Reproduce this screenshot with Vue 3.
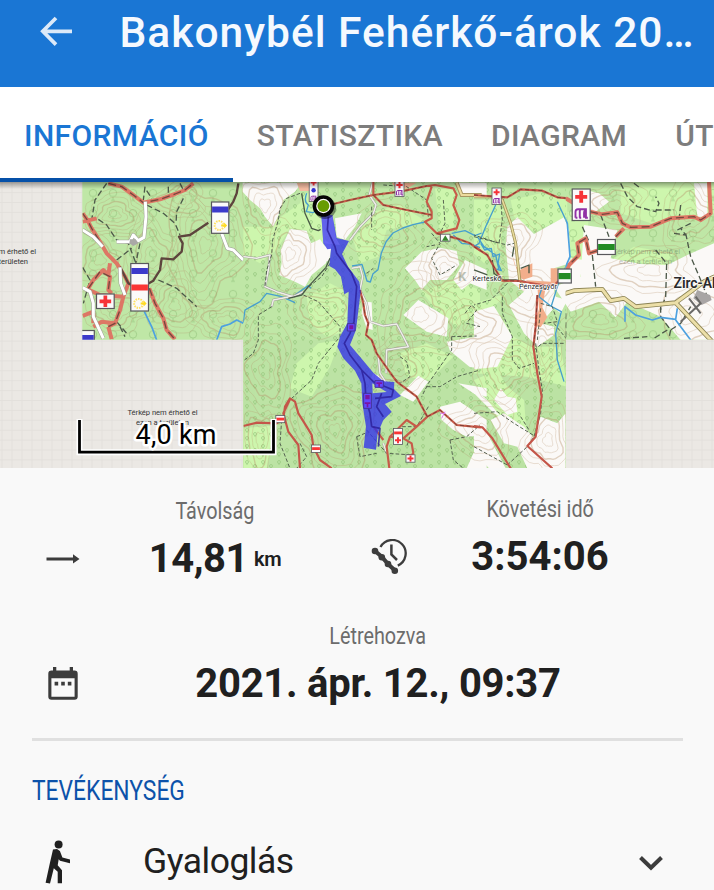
<template>
  <div class="screen">
    <header class="app-bar">
      <svg class="back" viewBox="0 0 36 36" width="36" height="36">
        <path d="M18 4 4.8 17.3 18 30.6M5 17.3h29" fill="none" stroke="#dce9f8" stroke-width="3.7" />
      </svg>
      <h1 class="title"><span>Bakonybél Fehérkő-árok 20…</span></h1>
    </header>

    <nav class="tabs">
      <a v-for="tab in tabs" :key="tab" class="tab" :class="{ active: tab === activeTab }" @click="activeTab = tab">{{ tab }}</a>
    </nav>

    <div class="map">
      <svg viewBox="0 182 714 286" width="714" height="286">
        <defs>
          <pattern id="grid" width="10" height="9.9" patternUnits="userSpaceOnUse" x="1.5" y="4">
            <rect width="10" height="10" fill="#ebe8e4" />
            <path d="M0 .5h10M.5 0v10" stroke="#e2dfdb" stroke-width=".9" />
          </pattern>
          <pattern id="bigTrees" width="20" height="20.200" patternUnits="userSpaceOnUse" x="83" y="186">
            <path d="M10 11v3.500M8 14.500h4" stroke="#8fbf79" stroke-width=".7" />
            <circle cx="10" cy="7" r="3.700" fill="none" stroke="#8fbf79" stroke-width=".7" />
          </pattern>
          <pattern id="smallTrees" width="16" height="16" patternUnits="userSpaceOnUse" x="243" y="186">
            <g fill="none" stroke="#93c67b" stroke-width=".65">
              <circle cx="4" cy="4" r="1.5" /><circle cx="12" cy="8" r="1.5" /><circle cx="4" cy="12" r="1.5" />
              <path d="M4 5.500v1.500M12 9.500v1.500M4 13.500v1.500" />
            </g>
          </pattern>
          <clipPath id="tiles"><path d="M82.300 182H714V339.700H565.700V468H243.300V339.700H82.300z" /></clipPath>
          <clipPath id="leftTile"><path d="M82.300 182H243.300V339.700H82.300z" /></clipPath>
          <clipPath id="midTile"><path d="M243.300 182H565.700V468H243.300z" /></clipPath>
          <clipPath id="rightTile"><path d="M565.700 182H714V339.700H565.700z" /></clipPath>
          <linearGradient id="topShade" x1="0" y1="0" x2="0" y2="1">
            <stop offset="0" stop-color="#000" stop-opacity=".34" />
            <stop offset="1" stop-color="#000" stop-opacity="0" />
          </linearGradient>
        </defs>

        <rect x="0" y="182" width="714" height="286" fill="url(#grid)" />
        <g class="notice">
          <text x="-34" y="253.500" textLength="70">Térkép nem érhető el</text>
          <text x="-25" y="264" textLength="53">ezen a területen</text>
          <text x="127.500" y="414.500" textLength="70">Térkép nem érhető el</text>
          <text x="136" y="425" textLength="53">ezen a területen</text>
        </g>

        <g clip-path="url(#tiles)">
          <rect x="82" y="182" width="632" height="286" fill="#bfe7a6" />
          <rect x="243" y="339.700" width="323" height="129" fill="#bce3a4" />

          <g v-for="area in fills" :key="area.x" :transform="place(area.x)">
            <path v-for="d in area.light" :key="d" :d="d" fill="#cdf6ad" />
          </g>
          <rect x="82" y="182" width="161.300" height="158" fill="url(#bigTrees)" opacity=".8" />
          <rect x="243.300" y="182" width="322.400" height="286" fill="url(#smallTrees)" />
          <rect x="565.700" y="182" width="149" height="158" fill="url(#bigTrees)" opacity=".8" />
          <g v-for="area in fills" :key="'w' + area.x" :transform="place(area.x)">
            <path v-for="d in area.open" :key="d" :d="d" fill="#fbf9f7" />
          </g>

          <g class="contour">
            <path v-for="(line, i) in contours" :key="i" :d="line.d" :class="{ thick: line.thick }" />
          </g>

          <g clip-path="url(#leftTile)">
            <g :transform="place(0)">
              <path class="dash wide" d="M320 10 285 60 275 120M295 118 320 135 350 180 385 190 408 250M440 75 490 100 525 130 540 165M550 55 530 95 528 130M420 190 405 260M248 262 270 300 250 370M350 240 395 205M475 300 530 325 590 380M350 425 380 460M435 20 430 60M505 20v30M440 32 455 55M540 10 550 30M360 440 375 470" />
              <path class="trail wide" d="M325 10 365 20 400 45 430 68 480 58 525 42 555 30 580 10M248 100 262 120 275 145 300 185 320 220 350 250 375 290 385 310 370 350 360 390 345 430 325 440M248 125 290 115M262 330 280 300 310 270 330 290 325 330 335 340M325 285 330 250M268 330 300 345 370 350M248 408 280 395M280 440 305 425 345 430M280 400v30M325 440 335 478M448 325 465 370 490 415 500 450 525 478" />
              <path class="trailDash wide" d="M325 10 365 20 400 45 430 68 480 58 525 42 555 30 580 10M248 100 262 120 275 145 300 185M265 325 300 275 330 290 325 330M448 325 465 370 490 415 500 450 525 478M325 440 345 430 360 390" />
              <path d="M360 260 385 310 420 325 460 302 480 270 485 235 520 238 545 215 548 190 537 170 570 165 625 128M680 95 700 65 710 40 715 10" fill="none" stroke="#5d443d" stroke-width="7" stroke-linejoin="round" />
              <path class="casing" d="M436 65 438 110 432 172 415 182 400 165 390 185 350 185M248 150 280 170 308 200M360 262 362 310 375 345M248 323 270 335 280 370 280 410 310 475M665 160 682 205 700 210 730 240" />
              <path class="whiteRoad" d="M436 65 438 110 432 172 415 182 400 165 390 185 350 185M248 150 280 170 308 200M360 262 362 310 375 345M248 323 270 335 280 370 280 410 310 475M665 160 682 205 700 210 730 240" />
              <path d="M390 178h17l8 12-15 8-12-8z" fill="#aaa8a7" />
              <path class="stream wide" d="M433 395 455 440 470 480M650 480 665 440 690 432 710 420 730 430" />
            </g>
          </g>

          <g clip-path="url(#midTile)">
            <g :transform="place(240)">
              <path d="M170 8h55l-10 25h-35z" fill="#f3bba0" />
              <path d="M455 8h75l-30 18-35-4z" fill="#f7b494" />
              <path class="stream" d="M200 40q-10 25 5 35l-6 20 20 3 15-12M0 440l10-15 5-35 45-25 20-25 45 10 40 18M165 345l40-28 8 8M336 258l30-5 15 50 10 3 8-25 15-12 10-50 15-35 20-25 30-15 30-10 35-8M635 160l40-8 30 15 20-8M640 165l25 25 30 3 25 10" />
              <path class="casing small" d="M0 228 50 235 90 225 85 270 75 320 110 335 160 350 190 335M95 380 100 360 160 348M398 5 388 45 408 75 400 100 360 140 330 180M335 265 360 260 368 290 360 330 380 370 390 425 430 438 470 432 490 470 505 500 440 510 438 580M415 530 420 580 440 610M430 790 440 820" />
              <path class="whiteRoad small" d="M0 228 50 235 90 225 85 270 75 320 110 335 160 350 190 335M95 380 100 360 160 348M398 5 388 45 408 75 400 100 360 140 330 180M335 265 360 260 368 290 360 330 380 370 390 425 430 438 470 432 490 470 505 500 440 510 438 580M415 530 420 580 440 610M430 790 440 820" />
              <path class="dash" d="M180 40 140 55 120 85 115 120 98 180 95 225 80 270 75 320M190 345 235 365 300 440 300 470 235 550 215 600 155 655M95 380 55 405 55 480 40 520 0 550M270 250 245 290 200 325M380 280 400 265M395 80 395 150M430 15 500 20 560 60 565 110M575 160 600 190 575 235 600 285 650 255M610 60 615 130 600 160M585 195 560 200M675 400 695 375 710 390 680 430 720 440M635 470 710 468M635 470 635 510 600 560 565 610 545 650M480 530 500 545 510 590 480 610 450 580M560 620 600 620 650 590 720 570M125 720 120 790 150 865M180 790 200 830 170 865M350 770 375 760M350 770 360 830 410 820M380 750 440 820 520 825M565 680 530 740 480 740M630 780 680 770 720 735M630 780 640 840 670 865M510 770 500 800" />
              <path class="lane" d="M185 40 195 100 215 145 235 152 242 148M270 235 258 262 205 320 185 345 145 355" />
              <path class="road" d="M280 72 330 60 400 45 480 35 560 18 585 15 640 25 650 45 640 75 658 120 650 145 590 160 555 125 575 115 575 95 560 65 575 20M400 45 430 75 500 90 575 105M400 5v40M590 160 650 175 690 190 722 212M360 330 370 370 375 405 385 430 378 465 395 480 410 520 445 570 470 605 530 650 562 710M562 710 600 690 650 735 722 742M562 710 530 740 490 775 450 770 440 800 448 865M530 740 500 720 470 750 450 770M400 740 430 780M490 775 515 790 520 820 500 840" />
              <path class="roadDots" d="M280 72 330 60 400 45 480 35 560 18M400 45 430 75 500 90 575 105M590 160 650 175 690 190 722 212M360 330 370 370 375 405 385 430 378 465 395 480 410 520 445 570 470 605 530 650 562 710M562 710 600 690 650 735 722 742" />
              <path class="road strong" d="M10 738 50 728 110 730 130 715 135 680 150 655 165 665 175 700 200 740 215 765 220 800 240 840 275 865M150 658 130 700 145 755 175 795 180 865" />
              <path d="M650 8 665 45 725 45" fill="none" stroke="#a79662" stroke-width="12" />
              <path d="M650 8 665 45 725 45" fill="none" stroke="#ecdb9d" stroke-width="6" />
              <path d="M605 715l10-20M600 700h16" stroke="#dc7ce8" stroke-width="3" />
            </g>
            <g :transform="place(474)">
              <path d="M112 215l10 40 15 15 38-20v40l-30 10 85 5v-40h20l5 35 5 10-45 12-10 60 15 30-20 30-20-5 15-50-5-70-55-25z" fill="#f2ae8b" />
              <path class="stream" d="M65 75 35 140 15 190 0 200M10 170 30 200 65 225 75 270M20 190l12 20 20-5 5 25 20-8-5 28 10 22-15-5M250 65 280 130 288 230 250 320 232 378M205 320 195 350 230 378 262 395 245 460 250 540 270 605" />
              <path class="dash" d="M80 60 85 120 75 190 0 165M0 170 100 195 120 190M100 310 50 360 0 375M85 350 85 400 115 470 115 540 135 565 180 550M200 370 235 380 250 425 210 430M180 510 205 490 270 490M240 430 280 480M185 490 195 570 205 630 200 700 180 770 160 800 100 855M0 700 70 695 120 730 185 770M0 800 100 855M200 385 190 480M140 710 165 750" />
              <path class="lane" d="M120 200 115 230M55 240 60 280 85 300 125 300 155 305M140 265 165 255 165 280M0 270 40 285" />
              <path d="M0 50h60l25 10 25 70 15 60 12 110 10 10" fill="none" stroke="#9e9158" stroke-width="9" />
              <path d="M0 50h60l25 10 25 70 15 60 12 110 10 10" fill="none" stroke="#e9db9c" stroke-width="4.500" />
              <path class="road strong" d="M0 45 40 48 100 52 140 28 205 32 250 52 280 55M0 200 40 225 65 270 85 302 135 303M135 303 205 315 240 315M190 345 185 440 178 500 190 580 203 650 185 770 160 798 235 865M0 738 25 742 55 775 110 865M240 315 270 290" />
              <path class="roadDots" d="M0 45 40 48 100 52 140 28 205 32 250 52 280 55M0 200 40 225 65 270 85 302 135 303M190 345 185 440 178 500" />
            </g>
          </g>

          <g clip-path="url(#rightTile)">
            <g :transform="place(474)">
              <path class="dash wide" d="M440 10 460 50 490 80 545 95 555 70 545 50M545 90 600 90M480 10 500 25M325 140 345 185M380 105 405 170M355 225 365 320M545 210 578 250 575 350 560 390M560 380 560 410 590 450 620 430 650 380M590 450 585 475M620 75 615 120M610 150 650 130M600 160 635 165 620 145M635 160 650 230 680 300 700 350M450 475 520 470M580 450 540 475M275 400v75" />
              <path class="trail wide" d="M275 55 300 70M348 95 385 103 430 97 445 130 470 142 530 140 590 115 660 110 680 120 710 100 705 5M450 145 425 170M370 212 345 220 335 175 310 190 315 225 285 255 270 290" />
              <path class="trailDash wide" d="M348 95 385 103 430 97 445 130 470 142 530 140 590 115 660 110 680 120 710 100M425 170 450 145M370 212 345 220 335 175 310 190 315 225 285 255" />
              <path class="stream wide" d="M250 65 280 130 288 230 275 260M453 425 453 380 485 405 535 420 560 412 605 418 610 385M605 420 650 480" />
              <path d="M670 330l38 15 5 15-30 15-25-20z" fill="#a8a5a5" />
              <path d="M620 425 680 370 665 350M645 355 680 400" fill="none" stroke="#6b6a68" stroke-width="6" />
              <path d="M245 305 268 342 300 332 385 328 410 362 450 355 485 380 605 368 650 335 690 305 722 290M605 368 715 485" fill="none" stroke="#8b8354" stroke-width="14" stroke-linejoin="round" />
              <path d="M245 305 268 342 300 332 385 328 410 362 450 355 485 380 605 368 650 335 690 305 722 290M605 368 715 485" fill="none" stroke="#ecdfa8" stroke-width="9" stroke-linejoin="round" />
            </g>
          </g>

          <!-- place names -->
          <text x="458" y="281" font-size="13" font-weight="700" fill="#7d8b76" opacity=".5">K</text>
          <text class="place" x="472.500" y="281" font-size="7.600" textLength="29">Kerteskő</text>
          <text class="place" x="519" y="288.500" font-size="7.600" textLength="38">Pénzesgyőr</text>
          <text class="place" x="673.500" y="287.500" font-size="14" font-weight="600" textLength="53" lengthAdjust="spacingAndGlyphs">Zirc-Akli</text>
          <g class="notice faded">
            <text x="613" y="253.500" textLength="67">Térkép nem érhető el</text>
            <text x="619" y="264" textLength="53">ezen a területen</text>
          </g>

          <!-- hiking signs -->
          <g v-for="(s, i) in signs" :key="'s' + i" :transform="`translate(${s.x} ${s.y})`">
            <rect :width="s.w" :height="s.h" fill="#fbfafa" stroke="#58585c" :stroke-width="s.w > 12 ? 1.2 : .8" />
            <template v-for="(m, j) in s.marks" :key="j">
              <rect v-if="m.kind === 'bar'" x=".6" :y="m.y" :width="s.w - 1.200" :height="m.h" :fill="m.color" />
              <path v-if="m.kind === 'cross'" :d="cross(s.w / 2, m.y, m.r)" fill="#f63338" />
              <circle v-if="m.kind === 'dot'" :cx="s.w / 2" :cy="m.y" r="2.200" fill="#3433d0" />
              <path v-if="m.kind === 'ruin'" :transform="`translate(${s.w / 2} ${m.y}) scale(${m.r})`" d="M-6 5V-1Q-6-4-3.500-4H6M-1.500 5V-1.500Q-1.500-4 0-4M3 5V0Q3-3 5-3V5M-6 5h2M-2 5h2M4 5h3" fill="none" stroke="#9132a6" stroke-width="2" />
              <g v-if="m.kind === 'camino'">
                <circle :cx="s.w / 2 - 1" :cy="m.y" r="4.500" fill="none" stroke="#ffe164" stroke-width="2" stroke-dasharray="1.500 1" />
                <path :transform="`translate(${s.w / 2} ${m.y})`" d="M1-1h3v-2l3 3-3 3V1H1z" fill="#ffdb25" />
              </g>
              <path v-if="m.kind === 'peak'" d="M1.500 6.500 4.800 1l3.400 5.500z" fill="#36852d" />
            </template>
          </g>

          <!-- recorded track -->
          <g :transform="place(240)">
            <path fill-rule="evenodd" fill="#3534e8" fill-opacity=".8" d="M244 105 250 190 262 208 273 206 268 258 285 268 303 290 313 343 326 335 322 430 300 470 292 500 310 535 345 572 364 610 367 670 378 740 371 803 408 809 413 760 430 720 455 695 435 672 483 648 462 627 463 606 430 604 400 578 360 530 330 495 348 450 362 335 358 305 325 262 306 222 327 183 290 174 277 105zM397 610 410 618 440 636 398 640z" />
            <path d="M244 105 250 190 300 195 288 174 277 105z" fill="#7772ff" opacity=".45" />
            <path d="M265 110 262 150 285 200 290 220 335 280 350 320 342 425 330 460 313 490 330 525 365 570 375 610 378 660 390 700 395 740M365 570 400 605 460 630 455 650 405 655M425 640 410 680 430 710M395 740 420 745 415 800" fill="none" stroke="#2d219b" stroke-opacity=".85" stroke-width="5" stroke-linejoin="round" />
            <path d="M322 431h23v22h-23zM405 602h25v20h-25zM371 640h23v45h-23z" fill="#6248ff" stroke="#443397" stroke-width="3" />
            <path d="M328 436h12v12h-12zM376 645h13v13h-13zM409 607h17v5h-6v8h-5v-8h-6zM374 667h17v5h-6v10h-5v-10h-6z" fill="#7b16a0" />
          </g>
          <ellipse cx="325" cy="208" rx="11" ry="11" fill="#000" opacity=".4" />
          <circle cx="323.400" cy="206" r="9" fill="#fff" stroke="#050505" stroke-width="3.600" />
          <circle cx="323.400" cy="206" r="6" fill="#689c03" />
        </g>

        <!-- scale bar -->
        <g fill="none" stroke-linejoin="miter">
          <path d="M79.500 419V452.200H273.500V419" stroke="#fff" stroke-width="6" />
          <path d="M79.500 420V452.200H273.500V420" stroke="#000" stroke-width="2.800" />
        </g>
        <text class="scale" x="135.500" y="444" textLength="81">4,0 km</text>
        <rect x="0" y="182" width="714" height="7" fill="url(#topShade)" />
      </svg>
    </div>

    <main class="info">
      <section class="stats">
        <div class="icon-cell">
          <svg viewBox="0 0 36 12" width="36" height="12">
            <path d="M1.500 4.600H28V1.200L34.500 6 28 10.600V7.400H1.500z" fill="#3c3c3c" />
          </svg>
        </div>
        <div class="stat">
          <span class="label">Távolság</span>
          <span class="value distance">14,81<small>km</small></span>
        </div>
        <div class="icon-cell second">
          <svg viewBox="0 0 36 36" width="36" height="36" fill="none" stroke="#3d3d3d">
            <path d="M9.500 8A13.400 13.400 0 1 1 26.800 26.600" stroke-width="2.300" />
            <path d="M20.400 5.500V15.500L26 21" stroke-width="2.500" />
            <path d="M4 12 11 18 17 25 24 31.500" stroke-width="4" />
            <g fill="#3d3d3d" stroke="none">
              <circle cx="4" cy="12" r="3.300" /><circle cx="10.800" cy="18.300" r="3.300" />
              <circle cx="17" cy="25" r="3.300" /><circle cx="23.800" cy="31.700" r="3.300" />
            </g>
          </svg>
        </div>
        <div class="stat raised">
          <span class="label">Követési idő</span>
          <span class="value">3:54:06</span>
        </div>
      </section>

      <section class="created">
        <div class="icon-cell">
          <svg viewBox="0 0 32 36" width="32" height="36">
            <path d="M6 1h3.300v3.600h13.400V1H26v3.600h1.500a3.200 3.200 0 0 1 3.200 3.200v22.700a3.200 3.200 0 0 1-3.200 3.200h-23A3.200 3.200 0 0 1 1.300 30.500V7.800a3.200 3.200 0 0 1 3.200-3.200H6zM4.400 12.300v18.400h23.200V12.300z" fill="#3c3c3c" fill-rule="evenodd" />
            <path d="M7.600 15.800h3.600v3.600H7.600zM14.200 15.800h3.600v3.600h-3.600zM20.800 15.800h3.600v3.600h-3.600z" fill="#3c3c3c" />
          </svg>
        </div>
        <div class="stat">
          <span class="label">Létrehozva</span>
          <span class="value date">2021. ápr. 12., 09:37</span>
        </div>
      </section>

      <hr class="divider" />

      <h2 class="section-title"><span>TEVÉKENYSÉG</span></h2>
      <div class="activity">
        <svg class="walker" viewBox="0 0 26 44" width="26" height="44">
          <circle cx="13.600" cy="4.500" r="4" fill="#202020" />
          <path d="M8 9.500 12 9l2.900 2 2.500 6.500 7.600 2v3.800L15 20.800l-1.300-1.500-1 6 4.300 5V43.300h-4.300V31.800l-3.900-3.600L5 43.400.6 42.800 5 22.500z" fill="#202020" />
        </svg>
        <span class="name">Gyaloglás</span>
        <svg class="chevron" viewBox="0 0 26 18" width="26" height="18">
          <path d="M2.500 2.500 13 12.800 23.500 2.500" fill="none" stroke="#3c3c3c" stroke-width="4" />
        </svg>
      </div>
    </main>
  </div>
</template>

<script setup>
import { ref } from 'vue'

const tabs = ['INFORMÁCIÓ', 'STATISZTIKA', 'DIAGRAM', 'ÚTPONTOK']
const activeTab = ref('INFORMÁCIÓ')

// map artwork is drawn in thirds of a pixel, one sheet per column
const place = x => `translate(${x} 180) scale(.33333)`

const cross = (x, y, r) => {
  const t = r * 0.32
  return `M${x - t} ${y - r}h${2 * t}v${r - t}h${r - t}v${2 * t}h${t - r}v${r - t}h${-2 * t}v${t - r}h${t - r}v${-2 * t}h${r - t}z`
}

const fills = [
  {
    x: 240,
    light: [
      'M110 120 180 70 190 40 240 40 245 110 250 210 200 150 150 145 110 210 60 250 10 225 10 140 100 140z',
      'M200 350 270 310 310 330 325 430 300 460 260 470 210 430z',
      'M170 550 235 490 300 480 270 560 215 650 150 625z',
      'M400 95 480 75 560 125 440 150 415 230 360 250 340 180z',
      'M545 335 640 300 720 330 720 400 650 440 590 390z',
      'M480 520 560 490 640 530 570 600 500 590z',
      'M10 745 110 735 80 865 10 865z',
      'M585 25 650 30 640 150 600 160z'
    ],
    open: [
      'M8 8H185L165 35 130 60 118 100 100 140 75 110 60 85 30 60 8 35z',
      'M150 147 200 152 213 190 240 178 262 210 258 250 215 285 195 320 165 305 118 285 125 250 122 210 135 180z',
      'M285 115 365 100 345 140 315 180 290 170z',
      'M495 265 545 215 600 203 650 213 658 255 620 300 570 300 545 330 525 300z',
      'M675 240 740 270 740 330 690 310 665 330 640 300z',
      'M535 360 590 393 625 415 620 470 560 455 490 405z',
      'M620 485 740 465 740 565 690 562 630 512z',
      'M535 587 565 605 520 665 480 645z',
      'M600 680 660 665 740 720 740 765 680 770 640 750 605 720z',
      'M370 365 395 367 398 450 380 445 365 400z',
      'M255 180 275 195 268 240 250 250z',
      'M400 580 440 600 430 610 390 600z',
      'M680 865 700 820 740 800 740 865z',
      'M655 8H740V50H670z',
      'M655 610 740 625 740 650 700 640z'
    ]
  },
  {
    x: 474,
    light: [
      'M0 60 60 60 90 90 80 200 30 250 0 220z',
      'M110 60 200 40 280 60 280 110 180 155 120 110z',
      'M100 340 60 380 120 470 170 500 260 500 280 620 160 590 0 580 0 370z',
      'M280 95 345 100 330 290 290 310z',
      'M440 10 720 10 720 100 660 110 530 130 440 100z',
      'M0 600 70 570 100 620 150 660 160 790 100 760z',
      'M410 240 480 200 600 220 570 255z'
    ],
    open: [
      'M100 140 130 112 180 162 270 112 285 150 288 250 240 265 235 310 245 350 280 360 260 400 240 385 200 430 240 440 240 465 190 500 150 460 105 375 150 335 105 300 95 200z',
      'M290 235 330 240 318 295 288 308z',
      'M0 395 60 378 115 470 70 560 0 568z',
      'M335 30 375 40 405 65 360 98 335 85z',
      'M330 135 430 150 410 235 500 252 580 255 640 225 720 190V480H620L560 410 460 365 425 412 375 365 290 395 240 320 320 290z',
      'M660 10H700V110H670z',
      'M80 625 100 650 125 655 130 695 100 705 60 660z',
      'M0 625 40 660 80 710 60 700 0 640z',
      'M50 720 90 700 150 740 180 775 200 710 250 730 275 700V865H160L130 800 90 790z',
      'M0 745 40 760 95 865H45L0 815z'
    ]
  }
]

// wobbly closed rings that read as height lines
const hills = [
  [115, 215, 34, 24, 6], [150, 255, 26, 38, 5], [205, 245, 40, 55, 7], [115, 310, 38, 22, 5], [225, 320, 34, 22, 5], [180, 200, 26, 18, 4],
  [175, 305, 26, 30, 5], [100, 260, 22, 22, 4],
  [290, 254, 24, 32, 5], [322, 310, 38, 24, 5], [335, 430, 38, 46, 7], [265, 370, 28, 46, 5], [385, 230, 35, 30, 5], [420, 315, 44, 46, 6],
  [445, 268, 28, 26, 5], [505, 370, 36, 34, 6], [512, 240, 28, 28, 5], [480, 430, 34, 30, 5], [548, 440, 24, 34, 5], [398, 366, 28, 28, 5],
  [470, 325, 30, 22, 4], [545, 350, 20, 34, 5], [265, 205, 22, 26, 4], [615, 205, 32, 24, 5], [650, 270, 44, 24, 4], [600, 320, 40, 26, 5],
  [690, 215, 30, 34, 5], [690, 315, 32, 26, 3], [260, 440, 16, 32, 4], [525, 295, 30, 26, 4]
]

const contours = hills.flatMap(([cx, cy, rx, ry, count], h) =>
  Array.from({ length: count }, (_, k) => {
    const f = (k + 1) / count
    const points = Array.from({ length: 36 }, (_, i) => {
      const a = (i / 36) * Math.PI * 2
      const w = f * (1 + 0.15 * Math.sin(a * 3 + h) + 0.08 * Math.sin(a * 5 + h * 2 + k * 0.4) + 0.04 * Math.cos(a * 9 + k))
      return `${(cx + Math.cos(a) * rx * w).toFixed(1)} ${(cy + Math.sin(a) * ry * w).toFixed(1)}`
    })
    return { d: `M${points.join('L')}z`, thick: k % 4 === 2 }
  })
)

const blue = '#3c3acb'
const red = '#fa3535'
const green = '#238b25'

const signs = [
  { x: 211.500, y: 202, w: 17.300, h: 31.300, marks: [{ kind: 'bar', y: 4.500, h: 6, color: blue }, { kind: 'camino', y: 23.500 }] },
  { x: 130.800, y: 263.500, w: 17.700, h: 47.500, marks: [{ kind: 'bar', y: 4.500, h: 6, color: blue }, { kind: 'bar', y: 21, h: 6, color: red }, { kind: 'camino', y: 40 }] },
  { x: 96.500, y: 294, w: 17.700, h: 14.500, marks: [{ kind: 'cross', y: 7.300, r: 5.800 }] },
  { x: 77, y: 330.500, w: 17.300, h: 20, marks: [{ kind: 'bar', y: 4.500, h: 6, color: blue }] },
  { x: 309.200, y: 176, w: 8.800, h: 25.500, marks: [{ kind: 'cross', y: 6.500, r: 3 }, { kind: 'dot', y: 14.300 }, { kind: 'ruin', y: 22, r: 0.45 }] },
  { x: 395, y: 178, w: 9, h: 18.500, marks: [{ kind: 'cross', y: 7, r: 3.200 }, { kind: 'ruin', y: 14.500, r: 0.5 }] },
  { x: 492, y: 188, w: 9.200, h: 16.500, marks: [{ kind: 'cross', y: 4.300, r: 3 }, { kind: 'ruin', y: 12.500, r: 0.5 }] },
  { x: 572.200, y: 189, w: 18, h: 31.500, marks: [{ kind: 'cross', y: 7.800, r: 6 }, { kind: 'ruin', y: 24, r: 0.95 }] },
  { x: 597.500, y: 239.500, w: 17.800, h: 15, marks: [{ kind: 'bar', y: 4.500, h: 6, color: green }] },
  { x: 558, y: 269, w: 13.300, h: 14, marks: [{ kind: 'bar', y: 4, h: 6.200, color: green }] },
  { x: 440.500, y: 234.200, w: 9.500, h: 7, marks: [{ kind: 'peak' }] },
  { x: 275.800, y: 415.500, w: 9, h: 7.200, marks: [{ kind: 'bar', y: 2.200, h: 2.800, color: red }] },
  { x: 311.500, y: 445, w: 9, h: 7.400, marks: [{ kind: 'bar', y: 2.200, h: 2.800, color: red }] },
  { x: 393.500, y: 428.500, w: 9, h: 16, marks: [{ kind: 'bar', y: 3, h: 2.800, color: red }, { kind: 'cross', y: 11.800, r: 3 }] },
  { x: 406, y: 454.800, w: 9, h: 7.400, marks: [{ kind: 'cross', y: 3.700, r: 3 }] }
]
</script>

<style>
body {
  margin: 0;
  background: #f9f9f9;
}
</style>

<style scoped>
.screen {
  width: 714px;
  height: 890px;
  overflow: hidden;
  background: #f9f9f9;
  font-family: Roboto, 'Liberation Sans', sans-serif;
  color: #202020;
}

.app-bar {
  display: flex;
  height: 87px;
  box-sizing: border-box;
  padding: 8px 0 0 37.5px;
  background: #1a76d4;
}

.back {
  margin-top: 6px;
}

.title {
  margin: 0 0 0 46px;
  font-size: 42.5px;
  font-weight: 500;
  line-height: 50px;
  letter-spacing: 1px;
  white-space: nowrap;
  color: #f5f9fe;
}

.tabs {
  display: flex;
  height: 95px;
  background: #fff;
  overflow: hidden;
}

.tab {
  flex: none;
  box-sizing: border-box;
  height: 95px;
  padding: 0 24px;
  border-bottom: 4px solid transparent;
  font-size: 30px;
  font-weight: 500;
  line-height: 97px;
  letter-spacing: 0.4px;
  color: #7d7d7d;
}

.tab.active {
  border-bottom-color: #0550a8;
  color: #1a76d4;
}

.map {
  height: 286px;
}

.map svg {
  display: block;
}

.contour {
  fill: none;
  stroke: #b58f67;
  stroke-width: 0.7;
  opacity: 0.38;
}

.contour .thick {
  stroke-width: 1.4;
}

.dash,
.lane,
.road,
.roadDots,
.trail,
.trailDash,
.casing,
.whiteRoad,
.stream {
  fill: none;
  stroke-linejoin: round;
}

.dash {
  stroke: #4d594a;
  stroke-width: 2.8;
  stroke-dasharray: 11 6;
}

.dash.wide {
  stroke-width: 4;
  stroke-dasharray: 18 9;
}

.lane {
  stroke: #4a5a47;
  stroke-width: 4;
}

.road {
  stroke: #c75b49;
  stroke-width: 6.5;
}

.road.strong {
  stroke: #c45649;
}

.roadDots {
  stroke: #69392f;
  stroke-width: 2.4;
  stroke-dasharray: 12 8;
}

.trail.wide {
  stroke: #dd7765;
  stroke-width: 12;
}

.trailDash.wide {
  stroke: #76483e;
  stroke-width: 4;
  stroke-dasharray: 24 12;
}

.casing {
  stroke: #9c9d94;
  stroke-width: 12;
}

.casing.small {
  stroke-width: 7;
}

.whiteRoad {
  stroke: #fff;
  stroke-width: 9;
}

.whiteRoad.small {
  stroke: #efeee9;
  stroke-width: 4.5;
}

.stream {
  stroke: #469fce;
  stroke-width: 4;
}

.stream.wide {
  stroke: #4da1e0;
  stroke-width: 5;
}

.notice {
  font-size: 7.6px;
  fill: #343434;
}

.notice.faded {
  opacity: 0.3;
}

.place {
  fill: #29292b;
  stroke: #fff;
  stroke-width: 1.6px;
  stroke-opacity: 0.75;
  paint-order: stroke;
}

.scale {
  font-size: 27px;
  fill: #000;
  stroke: #fff;
  stroke-width: 5px;
  stroke-linejoin: round;
  paint-order: stroke;
}

.stats {
  display: grid;
  grid-template-columns: 62px 242px 106px 196px;
  height: 125px;
  padding: 0 32px;
}

.created {
  display: grid;
  grid-template-columns: 62px 568px;
  height: 145px;
  padding: 0 32px;
}

.icon-cell {
  display: flex;
  justify-content: center;
  padding-top: 85px;
}

.icon-cell.second {
  padding-top: 71px;
}

.created .icon-cell {
  padding-top: 73px;
}

.stat {
  display: flex;
  flex-direction: column;
  align-items: center;
  padding-top: 28px;
}

.stat.raised {
  padding-top: 26px;
}

.label {
  font-size: 24px;
  line-height: 30px;
  color: #6c6c6c;
  white-space: nowrap;
  transform: scaleX(0.825);
}

.value {
  margin-top: 9px;
  font-size: 40px;
  font-weight: 700;
  line-height: 48px;
  white-space: nowrap;
}

.value.distance {
  letter-spacing: -0.5px;
}

.value.date {
  letter-spacing: -0.25px;
}

.value small {
  margin-left: 6px;
  font-size: 20px;
  font-weight: 600;
  letter-spacing: -0.3px;
  vertical-align: 6px;
  line-height: 20px;
}

.divider {
  height: 2.5px;
  margin: 0 31px 0 32px;
  border: 0;
  background: #e0e0e0;
}

.section-title {
  margin: 34px 0 0 32px;
  font-size: 27px;
  font-weight: 400;
  line-height: 32px;
  color: #0c52aa;
}

.section-title span {
  display: inline-block;
  transform: scaleX(0.845);
  transform-origin: 0 50%;
}

.activity {
  display: flex;
  align-items: flex-start;
  margin-top: 31px;
  padding: 0 50px 0 45px;
}

.walker {
  margin-top: 2px;
}

.name {
  flex: 1;
  margin-left: 72px;
  font-size: 35.5px;
  line-height: 46px;
  letter-spacing: -0.5px;
}

.chevron {
  margin-top: 17px;
}
</style>
